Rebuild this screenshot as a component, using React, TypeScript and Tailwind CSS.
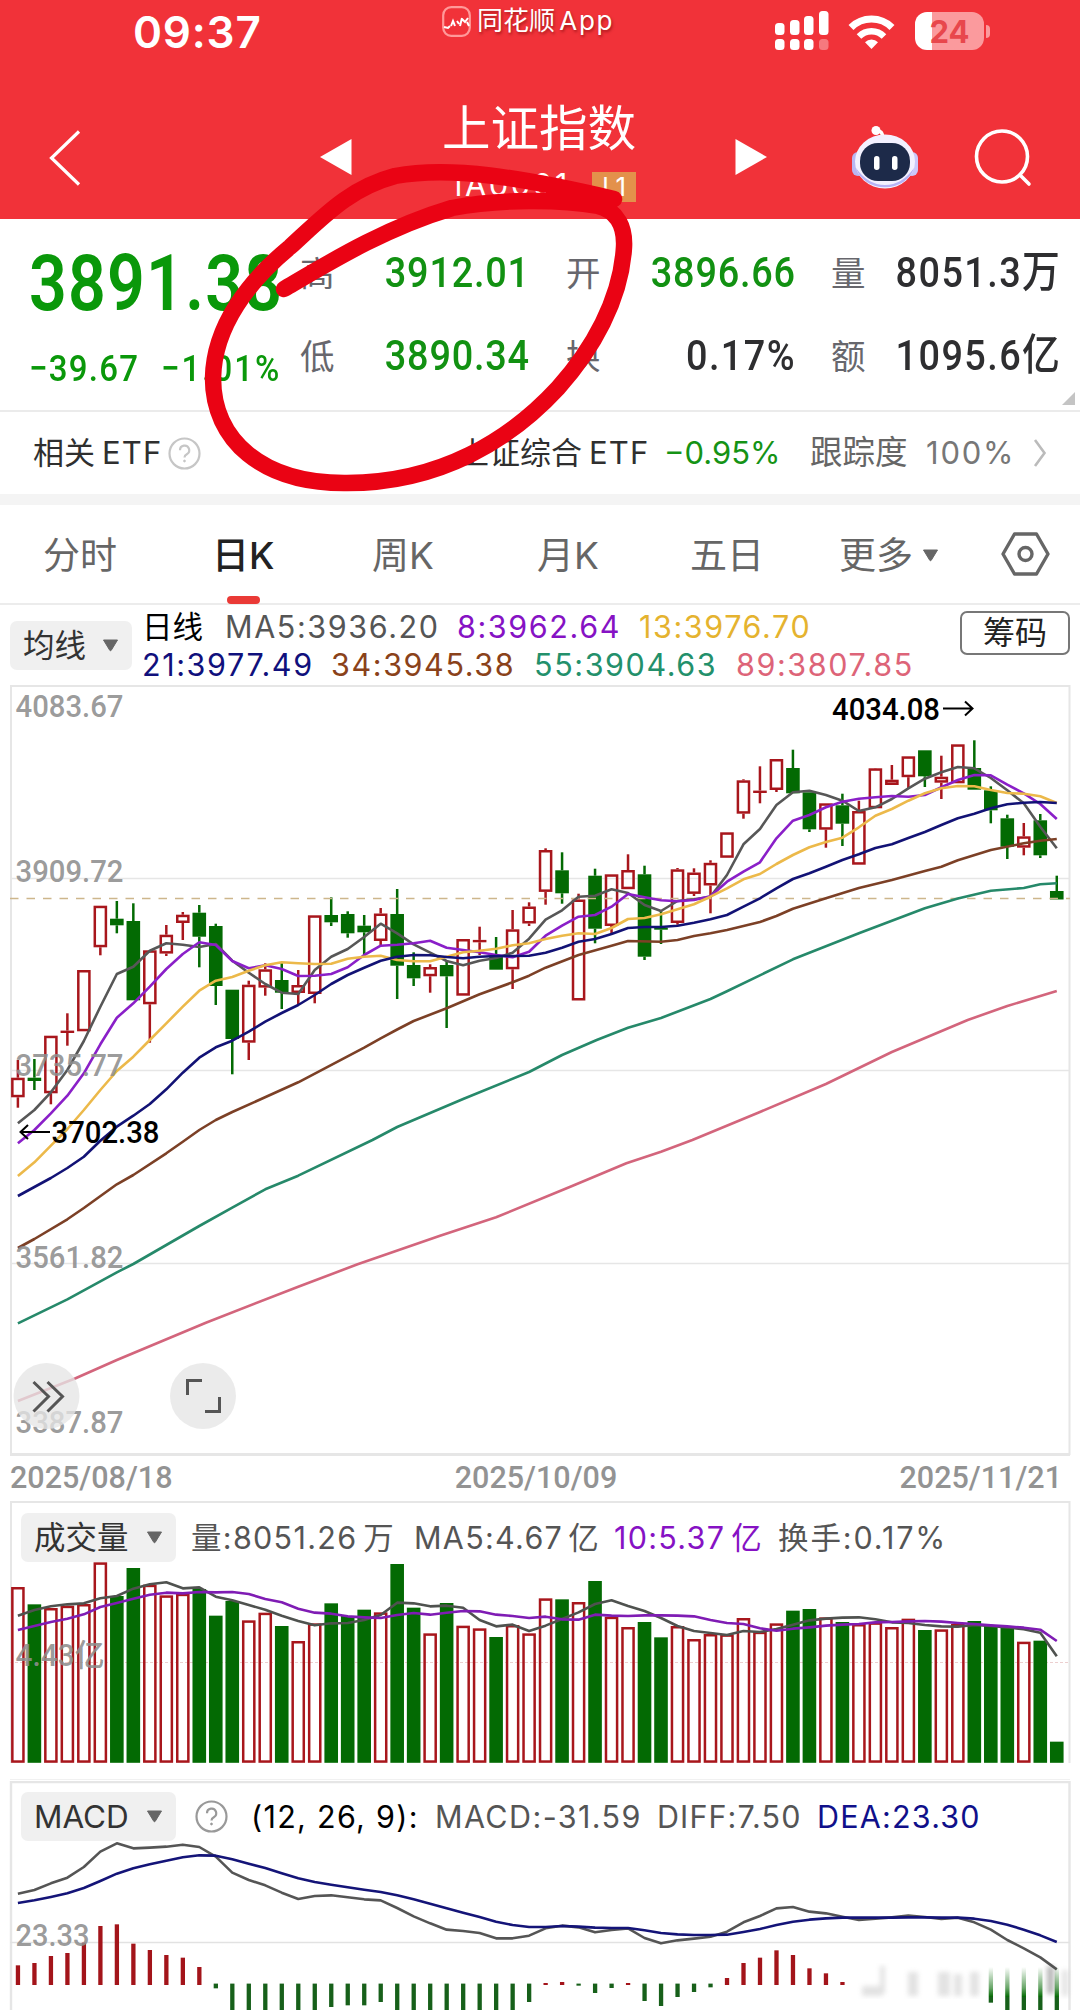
import clsx from "clsx";
import type { ReactNode } from "react";

type Candle = [
  up: number,
  high: number,
  top: number,
  bottom: number,
  low: number,
];

const STEP = 16.49;
const FIRST_X = 17.9;
const BAR_W = 13.6;
const xAt = (i: number) => FIRST_X + i * STEP;

const RED = "#a8161c";
const GREEN = "#036a03";

const CANDLES: Candle[] = [
  [1, 1060, 1077.7, 1097.3, 1107.7],
  [0, 1059, 1077.7, 1081, 1090],
  [1, 1035.7, 1035.7, 1093.3, 1104.3],
  [1, 1013.3, 1030.6, 1033, 1045.7],
  [1, 970, 970, 1031.3, 1031.3],
  [1, 905.7, 905.7, 947.3, 955.3],
  [0, 901, 918.7, 925.3, 933.3],
  [0, 903.3, 921, 1000.3, 1000.3],
  [1, 950.3, 950.3, 1004.3, 1042.7],
  [1, 925, 934.7, 953.6, 956],
  [1, 912, 914.7, 923, 940],
  [0, 905, 912.7, 936.7, 967.3],
  [0, 923.7, 926, 986, 1005],
  [0, 989.7, 989.7, 1039, 1074.3],
  [1, 980.7, 984.7, 1042.7, 1060],
  [1, 963.3, 969.3, 987.6, 995.7],
  [0, 962.7, 980, 992.7, 1009],
  [1, 970, 985, 993, 1004],
  [1, 915.3, 915.3, 994, 1003.3],
  [0, 897.3, 915, 922.3, 926],
  [0, 911.3, 914, 933.3, 937.7],
  [0, 915, 925.7, 932.3, 956.7],
  [1, 908, 913.5, 941, 945.7],
  [0, 889, 914, 965.7, 999],
  [0, 952.3, 965, 978.3, 986],
  [1, 964.3, 967, 976.3, 992.7],
  [0, 960, 965, 976.3, 1028],
  [1, 939, 939, 995.7, 995.7],
  [1, 926.7, 939.9, 942.3, 955],
  [0, 937, 955.7, 969.7, 969.7],
  [1, 910, 929.3, 969.3, 989],
  [1, 902.3, 906.5, 923.5, 926],
  [1, 848.3, 850, 891.9, 904.7],
  [0, 852.3, 870.3, 893.3, 903.7],
  [1, 893.7, 899.5, 1000.5, 1000.5],
  [0, 868.7, 875.7, 928.7, 943.3],
  [1, 874.3, 874.3, 926, 934],
  [1, 854.3, 870, 889.2, 889.2],
  [0, 865.7, 874.3, 956.7, 960],
  [0, 910, 927.7, 929.7, 944],
  [1, 868, 869.3, 923, 924.7],
  [1, 868.3, 872.5, 893.9, 896],
  [1, 860.3, 862.8, 885.5, 913.3],
  [1, 832.3, 832.3, 857.8, 857.8],
  [1, 779.3, 780.3, 813.7, 818.7],
  [1, 766.3, 790.6, 793, 803.3],
  [1, 759, 759, 790, 792],
  [0, 749.7, 768, 793.3, 793.3],
  [0, 792.3, 792.3, 829.3, 832],
  [1, 803.3, 803.3, 829.7, 847.7],
  [0, 793.7, 805.3, 823.7, 846],
  [1, 800.7, 811, 864.7, 864.7],
  [1, 768, 768.3, 808.3, 808.3],
  [1, 765, 779.7, 785, 785],
  [1, 756.3, 756.3, 777.2, 788.7],
  [0, 750.3, 750.3, 776.3, 787],
  [1, 755.7, 776.7, 782.7, 799],
  [1, 744.3, 744.3, 783.3, 783.3],
  [0, 740.3, 768, 789.7, 789.7],
  [0, 786.3, 790.3, 810.3, 823.3],
  [0, 814.7, 818.3, 846.7, 859],
  [1, 823, 836.3, 847.7, 855.3],
  [0, 814, 820.3, 855.3, 858],
  [0, 875.7, 891, 899.5, 899.5],
];

const MA5 = [
  1123.3, 1110, 1092.3, 1070, 1041, 1006.7, 974, 966.7, 950.7, 943.3, 944.7,
  947, 944, 960.7, 972.7, 984, 992.7, 994, 970, 956.7, 949, 937, 923.7, 933.3,
  944.3, 952.7, 961, 965.3, 960.7, 958, 952.7, 938.7, 919.7, 910.3, 896.7,
  895.7, 889.3, 893, 905, 911, 901, 899.3, 896.7, 875, 844.3, 829, 805, 792.3,
  790.7, 795, 800.7, 811, 807.3, 799, 788.3, 778.7, 772.3, 767, 768.3, 778,
  790.3, 803.3, 826.7, 848.3,
];
const MA8 = [
  1143.3, 1130, 1113.3, 1095.7, 1073.3, 1044.3, 1017.7, 1003.3, 986.7, 969,
  954, 942.3, 945, 961, 968.3, 965.3, 969, 976, 975.7, 974, 967.3, 955, 945.7,
  944.7, 943.3, 940.7, 947.7, 950, 952.3, 955, 957.3, 951.7, 935.7, 925.7,
  916.7, 915, 906.7, 894, 897.3, 900.3, 901.3, 900, 896.3, 881.7, 871.7, 862.3,
  838.3, 820.7, 815, 807.3, 801.7, 798.7, 797.3, 796, 796.7, 795, 787.3, 780,
  775, 775.3, 784.7, 793.3, 804, 819,
];
const MA13 = [
  1176, 1162.3, 1145.7, 1129, 1110, 1090, 1071, 1056.7, 1040, 1023.3, 1006.7,
  990.7, 980.7, 977, 970.7, 965.3, 962.3, 963.3, 964, 963.7, 958.7, 956.7,
  955.7, 960, 961.3, 961.3, 956.7, 952.3, 950.7, 948.7, 945.3, 943.3, 939,
  935.7, 933.3, 934, 928, 919, 918, 914.3, 909.3, 904.3, 896.7, 888.3, 879.3,
  874, 864, 855, 847.3, 842, 837.7, 827.3, 815.7, 809, 800.7, 793.3, 788.3,
  786, 786.3, 790, 793, 793.7, 796.3, 803,
];
const MA21 = [
  1196, 1187, 1178, 1168, 1156.7, 1140.7, 1126.7, 1115.7, 1104, 1089.3, 1072.7,
  1057.7, 1047.3, 1040.7, 1031.7, 1021.7, 1013, 1005, 995, 984, 975, 967.7,
  960.7, 956.7, 955, 955.3, 957, 958.3, 956.7, 956, 956, 955.7, 952.7, 947.7,
  941.7, 939, 934, 928, 927, 927, 925.7, 922.7, 919.3, 915, 906.7, 898.3,
  888.3, 879, 873.3, 866.7, 860, 854.3, 848, 844.3, 838, 832, 825, 818.3,
  813.7, 808.3, 804.3, 802.7, 802, 803,
];

// the slow averages are nearly straight, so [index, y] knots are enough
const MA34 = [
  [0, 1248], [1, 1239], [3, 1219.3], [4, 1208], [6, 1184.3], [7, 1175],
  [9, 1153.3], [10, 1141.7], [11, 1130], [12, 1120], [13, 1112], [17, 1082.3],
  [21, 1047.7], [22, 1038.3], [23, 1029.5], [24, 1021], [26, 1008.3],
  [28, 994.3], [30, 982.3], [31, 975.7], [32, 967.7], [34, 955], [36, 945.7],
  [37, 941], [39, 941.7], [40, 940], [41, 936], [42, 933.3], [43, 930],
  [44, 926], [45, 922], [46, 916], [47, 908.7], [49, 898.3], [51, 888],
  [53, 880], [55, 871], [56, 866.7], [57, 860.3], [59, 850], [61, 843.3],
  [62, 840.7], [63, 839],
];
const MA55 = [
  [0, 1323.3], [3, 1299.3], [6, 1272.3], [7, 1264], [11, 1226], [13, 1207.7],
  [15, 1189.3], [17, 1175.7], [21.5, 1140], [23, 1127], [27, 1099],
  [31, 1072], [33, 1055], [35.1, 1040], [37, 1027.7], [39, 1018], [42, 999],
  [43, 991.3], [47, 959.3], [51, 933.3], [55, 908.3], [57, 898.5],
  [59, 890.7], [61, 888], [62, 884.3], [63, 883.3],
];
const MA89 = [
  [0, 1401], [3.5, 1378.3], [6, 1360], [11.4, 1322.7], [17, 1286.7],
  [20.6, 1264.3], [25.6, 1235.7], [29, 1217.3], [33.5, 1186.7],
  [36.9, 1163.3], [39, 1151.7], [40.9, 1140], [45, 1112], [49, 1084],
  [53, 1052], [57.6, 1020], [60, 1006], [63, 991],
];

// volume and MACD are stored in thirds of a pixel from the panel origin
const VOLUME = [
  291, 343, 354, 347, 342, 217, 318, 234, 284, 316, 311, 297, 377, 333, 391,
  368, 408, 453, 400, 340, 378, 359, 367, 222, 353, 430, 339, 407, 415, 441,
  405, 430, 325, 328, 336, 273, 380, 411, 396, 442, 408, 447, 432, 433, 384,
  425, 400, 362, 357, 382, 396, 402, 397, 411, 386, 420, 418, 402, 393, 407,
  413, 455, 452, 755,
];
const VOL_MA5 = [
  377, 360, 349, 343, 340, 325, 318, 296, 283, 277, 295, 292, 320, 331, 345,
  359, 377, 393, 406, 400, 399, 390, 375, 338, 340, 349, 347, 353, 390, 409,
  404, 423, 407, 387, 367, 342, 331, 348, 363, 384, 408, 423, 429, 435, 423,
  426, 417, 404, 391, 386, 383, 382, 388, 397, 399, 405, 409, 410, 405, 408,
  412, 418, 428, 499,
];
const VOL_MA10 = [
  420, 408, 396, 386, 373, 351, 339, 326, 314, 308, 310, 306, 307, 306, 312,
  327, 337, 356, 368, 371, 379, 382, 384, 375, 369, 374, 368, 363, 364, 374,
  378, 384, 380, 388, 389, 374, 377, 378, 376, 376, 377, 379, 390, 399, 402,
  415, 422, 416, 412, 407, 404, 402, 397, 396, 394, 393, 395, 399, 402, 406,
  409, 413, 419, 453,
];
const DIFF = [
  371, 360, 340, 323, 291, 245, 220, 235, 233, 230, 224, 231, 260, 308, 330,
  346, 368, 387, 378, 376, 382, 388, 391, 414, 439, 460, 479, 483, 489, 505,
  505, 497, 475, 467, 472, 487, 480, 475, 504, 520, 511, 506, 500, 485, 457,
  438, 415, 411, 425, 430, 440, 450, 446, 442, 437, 441, 447, 443, 457, 479,
  510, 535, 562, 598,
];
const DEA = [
  399, 391, 381, 370, 354, 333, 311, 295, 283, 272, 262, 256, 257, 268, 281,
  294, 310, 325, 336, 344, 352, 359, 366, 376, 388, 401, 415, 428, 441, 455,
  465, 471, 471, 468, 470, 473, 474, 474, 481, 489, 493, 495, 495, 494, 486,
  477, 465, 455, 449, 445, 443, 443, 443, 443, 442, 442, 443, 443, 446, 453,
  464, 479, 496, 516,
];
// 0 = nothing drawn
const HIST = [
  586, 579, 558, 549, 518, 468, 463, 521, 540, 555, 563, 591, 655, 760, 760,
  760, 760, 760, 760, 711, 706, 706, 696, 760, 760, 760, 760, 760, 760, 760,
  760, 696, 639, 636, 647, 669, 654, 639, 693, 708, 681, 666, 652, 624, 579,
  563, 541, 555, 595, 610, 636, 0, 0, 0, 0, 0, 0, 0, 0, 698, 760, 760, 760,
  760,
];

const toPoints = (ys: number[]) => ys.map((y, i) => `${xAt(i)},${y}`).join(" ");
const knots = (ps: number[][]) =>
  ps.map(([i, y]) => `${xAt(i)},${y}`).join(" ");
const thirds = (ys: number[], origin: number) =>
  toPoints(ys.map((y) => origin + y / 3));

const Line = ({ points, color }: { points: string; color: string }) => (
  <polyline
    points={points}
    fill="none"
    stroke={color}
    strokeWidth={2.6}
    strokeLinejoin="round"
  />
);

const AxisLabel = ({
  x = 15.5,
  y,
  w = 108,
  children,
}: {
  x?: number;
  y: number;
  w?: number;
  children: string;
}) => (
  <text
    x={x}
    y={y}
    textLength={w}
    lengthAdjust="spacingAndGlyphs"
    className="fill-[#8e8e8e]/90 font-['Roboto','Noto_Sans_CJK_SC',sans-serif] text-[30.5px] font-medium"
  >
    {children}
  </text>
);

const Caret = () => (
  <svg width="17" height="13" viewBox="0 0 17 13">
    <path
      d="M1.5 1h14L9.3 11.2q-.8 1-1.6 0z"
      fill="#666"
      stroke="#666"
      strokeLinejoin="round"
    />
  </svg>
);

const Help = ({ color }: { color: string }) => (
  <svg width="33" height="33" viewBox="0 0 33 33" fill="none" stroke={color}>
    <circle cx="16.5" cy="16.5" r="15" strokeWidth="2.2" />
    <path
      d="M12 13.2a4.6 4.6 0 1 1 6.8 4q-2.3 1.3-2.3 3.2"
      strokeWidth="2.2"
    />
    <circle cx="16.5" cy="24" r=".9" fill={color} />
  </svg>
);

const StatusBar = () => (
  <div className="flex h-[62px] items-center text-white">
    <div className="w-[442px] pt-[2px] pl-[133px] text-[44px] leading-none font-semibold tracking-[0.8px]">
      09:37
    </div>
    <div className="flex w-[332px] items-center gap-[6px] pb-[20px]">
      <svg width="29" height="31" viewBox="0 0 29 31" fill="none">
        <rect
          x="1.2"
          y="1.2"
          width="26.6"
          height="28.6"
          rx="8"
          stroke="#f99"
          strokeWidth="2.2"
        />
        <path
          d="M2 21l4 1 2-2M9 20l2-5 2 5M15 15l2 3M18 20l2-8M20 13l3 3 3-4M25 16l2 4"
          stroke="#fff"
          strokeWidth="2"
        />
      </svg>
      <span className="text-[26px] leading-none whitespace-nowrap [text-shadow:1px_2px_3px_#6008]">
        同花顺 <span className="-ml-[3px] tracking-[1.7px]">App</span>
      </span>
    </div>
    <svg width="55" height="40" viewBox="0 0 55 40" fill="#fff">
      <rect x="1" y="12" width="9.5" height="12" rx="3.5" />
      <rect x="16" y="9" width="9.5" height="15" rx="3.5" />
      <rect x="30" y="5" width="9.5" height="19" rx="3.5" />
      <rect x="45" y="0" width="9.5" height="24" rx="3.5" />
      <rect x="1" y="28" width="9.5" height="11" rx="3.5" />
      <rect x="16" y="28" width="9.5" height="11" rx="3.5" />
      <rect x="30" y="28" width="9.5" height="11" rx="3.5" />
      <rect x="45" y="28" width="9.5" height="11" rx="3.5" opacity=".35" />
    </svg>
    <svg
      className="ml-[19px]"
      width="47"
      height="37"
      viewBox="0 0 47 37"
      fill="none"
      stroke="#fff"
      strokeWidth="7"
    >
      <path d="M3 14.5a29 29 0 0 1 41 0" />
      <path d="M11 23.5a17.7 17.7 0 0 1 25 0" strokeWidth="6.5" />
      <path
        d="M17 29.2a9.2 9.2 0 0 1 13 0L23.5 36z"
        fill="#fff"
        stroke="none"
      />
    </svg>
    <div className="ml-[20px] flex h-[38px] w-[69px] items-center justify-center rounded-[12px] bg-linear-to-r from-white from-25% to-[#fb9a9d] to-25% text-[31px] leading-none font-bold text-[#e8474c]">
      24
    </div>
    <div className="ml-[2px] h-[13px] w-[4px] rounded-r-full bg-[#fb9a9d]" />
  </div>
);

const Robot = () => (
  <svg width="68" height="66" viewBox="0 0 68 66">
    <path d="M32 13q-1-6-5-6" fill="none" stroke="#fff" strokeWidth="3.5" />
    <circle cx="25" cy="6.5" r="4.5" fill="#fff" />
    <rect x="1" y="28" width="12" height="24" rx="6" fill="#b9b6f3" />
    <rect x="55" y="28" width="12" height="24" rx="6" fill="#cbc8fa" />
    <ellipse cx="34" cy="37.5" rx="30" ry="27" fill="#f3f1ff" />
    <path d="M5 44a30 26 0 0 0 58 0q-12 17-29 17T5 44z" fill="#b6b2f5" />
    <rect x="9" y="19" width="50" height="38" rx="18" fill="#1d2a49" />
    <rect x="23" y="32" width="5.5" height="14" rx="2.7" fill="#fff" />
    <rect x="41" y="32" width="5.5" height="14" rx="2.7" fill="#fff" />
  </svg>
);

const TitleBar = () => (
  <div className="flex h-[157px] items-start text-white">
    <svg
      className="mt-[68px] ml-[48px]"
      width="34"
      height="56"
      viewBox="0 0 34 56"
    >
      <path
        d="M31 1.5L3.5 28 31 54.5"
        fill="none"
        stroke="#fff"
        strokeWidth="3.2"
      />
    </svg>
    <svg
      className="mt-[77px] ml-[238px]"
      width="32"
      height="36"
      viewBox="0 0 32 36"
    >
      <path d="M31.5 0v36L0 18z" fill="#fff" />
    </svg>
    <div className="mt-[39px] ml-[90px] flex w-[194px] flex-col items-center">
      <div className="text-[48.5px] leading-[56px] whitespace-nowrap">
        上证指数
      </div>
      <div className="mt-[15px] flex w-full items-center justify-between pl-[8px]">
        <span className="-mt-[5px] text-[31px] leading-[34px] tracking-[2.4px]">
          1A0001
        </span>
        <span className="flex h-[30px] w-[44px] items-center justify-center bg-[#e3914b] text-[26px] leading-none">
          L1
        </span>
      </div>
    </div>
    <svg
      className="mt-[77px] ml-[99px]"
      width="32"
      height="36"
      viewBox="0 0 32 36"
    >
      <path d="M.5 0v36L32 18z" fill="#fff" />
    </svg>
    <div className="mt-[62px] ml-[84px]">
      <Robot />
    </div>
    <svg
      className="mt-[67px] ml-[55px]"
      width="58"
      height="58"
      viewBox="0 0 58 58"
      fill="none"
      stroke="#fff"
      strokeWidth="3.6"
    >
      <circle cx="28" cy="27.5" r="25.5" />
      <path d="M46 46l9 9" strokeLinecap="round" />
    </svg>
  </div>
);

const Cell = ({
  label,
  value,
  green,
}: {
  label: string;
  value: ReactNode;
  green?: boolean;
}) => (
  <div className="flex h-[83px] items-center justify-between whitespace-nowrap">
    <span className="pt-[3px] text-[34.5px] leading-none text-[#67676d]">
      {label}
    </span>
    <span
      className={clsx(
        "origin-right scale-x-[0.88] font-['Roboto','Noto_Sans_CJK_SC',sans-serif] text-[43px] leading-none font-medium",
        green
          ? "tracking-[0.9px] text-[#129112]"
          : "tracking-[1.6px] text-[#2e2e30]",
      )}
    >
      {value}
    </span>
  </div>
);

const Quote = () => (
  <section className="relative flex h-[193px] border-b-2 border-[#ebebeb] bg-white">
    <div className="w-[300px] pl-[29px] font-['Roboto',sans-serif] whitespace-nowrap text-[#0a980a]">
      <div className="w-full origin-left scale-x-[0.86] pt-[24px] text-[77px] leading-[82px] font-semibold tracking-[1.4px]">
        3891.38
      </div>
      <div className="mt-[22px] flex text-[37.5px] leading-[42px] font-medium">
        <span className="w-[132px] origin-left scale-x-[0.88] tracking-[1.4px]">
          −39.67
        </span>
        <span className="origin-left scale-x-[0.88] tracking-[2.3px]">
          −1.01%
        </span>
      </div>
    </div>
    <div className="w-[230px] pt-[12px]">
      <Cell label="高" value="3912.01" green />
      <Cell label="低" value="3890.34" green />
    </div>
    <div className="ml-[36px] w-[230px] pt-[12px]">
      <Cell label="开" value="3896.66" green />
      <Cell label="换" value="0.17%" />
    </div>
    <div className="ml-[35px] w-[230px] pt-[12px]">
      <Cell label="量" value="8051.3万" />
      <Cell label="额" value="1095.6亿" />
    </div>
    <svg
      className="absolute right-[5px] bottom-[5px]"
      width="13"
      height="13"
      viewBox="0 0 13 13"
    >
      <path d="M13 0v13H0z" fill="#c4c4c4" />
    </svg>
  </section>
);

const EtfRow = () => (
  <section className="flex h-[93px] items-center border-b-[11px] border-[#f4f4f4] bg-white pl-[33px] text-[31px] whitespace-nowrap text-[#2f2f2f]">
    <span className="w-[135px]">
      相关<span className="ml-[7px] tracking-[1.2px]">ETF</span>
    </span>
    <Help color="#c6c6c6" />
    <span className="ml-[257px] w-[206px]">
      上证综合<span className="ml-[7px] tracking-[1.2px]">ETF</span>
    </span>
    <span className="w-[146px] text-[#159315]">−0.95%</span>
    <span className="w-[116px] text-[32.5px] text-[#666]">跟踪度</span>
    <span className="w-[107px] tracking-[1.8px] text-[#777]">100%</span>
    <svg width="14" height="28" viewBox="0 0 14 28">
      <path
        d="M2 1l9.5 13L2 27"
        fill="none"
        stroke="#bbb"
        strokeWidth="2.6"
      />
    </svg>
  </section>
);

const Tabs = () => (
  <nav className="flex h-[100px] items-center border-b-2 border-[#ececec] bg-white pt-[3px] text-[37px] whitespace-nowrap text-[#666]">
    <span className="w-[212px] pl-[43px]">分时</span>
    <span className="relative w-[160px] font-medium text-[#222]">
      日K
      <span className="absolute top-[68px] left-[15px] h-[8px] w-[33px] rounded-full bg-[#ea3a36]" />
    </span>
    <span className="w-[165px]">周K</span>
    <span className="w-[153px]">月K</span>
    <span className="w-[149px]">五日</span>
    <span className="flex w-[162px] items-center gap-[9px]">
      更多 <Caret />
    </span>
    <svg
      className="-mt-[3px]"
      width="49"
      height="44"
      viewBox="0 0 49 44"
      fill="none"
      stroke="#666"
      strokeWidth="3.4"
      strokeLinejoin="round"
    >
      <path d="M13.5 2h22L47 22 35.5 42h-22L2 22z" />
      <circle cx="24.5" cy="22" r="6.5" />
    </svg>
  </nav>
);

const Pill = ({
  children,
  className,
}: {
  children: string;
  className: string;
}) => (
  <div
    className={clsx(
      "flex h-[49px] shrink-0 items-center justify-between rounded-[7px] bg-[#f0f0f0] text-[31.5px] leading-none whitespace-nowrap text-[#333]",
      className,
    )}
  >
    {children}
    <Caret />
  </div>
);

const MaLegend = () => (
  <section className="flex h-[80px] bg-white pl-[10px] text-[30.5px] whitespace-nowrap">
    <Pill className="mt-[16px] w-[122px] px-[13px]">均线</Pill>
    <div className="ml-[10px] w-[818px] pt-[3px] tracking-[1.6px]">
      <div className="flex h-[38px] items-center">
        <span className="w-[83px] tracking-normal text-black">日线</span>
        <span className="w-[232px] text-[#555]">MA5:3936.20</span>
        <span className="w-[182px] text-[#8612c4]">8:3962.64</span>
        <span className="text-[#e5b32f]">13:3976.70</span>
      </div>
      <div className="flex h-[38px] items-center">
        <span className="w-[189px] text-[#10107c]">21:3977.49</span>
        <span className="w-[203px] text-[#8a421a]">34:3945.38</span>
        <span className="w-[202px] text-[#23906b]">55:3904.63</span>
        <span className="text-[#dd6478]">89:3807.85</span>
      </div>
    </div>
    <div className="mt-[6px] flex h-[44px] w-[110px] items-center justify-center rounded-[7px] border-2 border-[#777] text-[32px] leading-none text-[#222]">
      筹码
    </div>
  </section>
);

const KLine = () => (
  <svg
    className="block"
    width="1080"
    height="771"
    viewBox="0 685 1080 771"
    fill="none"
  >
    <path
      d="M10 878.5h1060M10 1070.5h1060M10 1263.5h1060"
      stroke="#e6e6e6"
      strokeWidth="1.5"
    />
    <path d="M11 1455V686H1069.5V1455" stroke="#e6e6e6" strokeWidth="2" />
    <path d="M10 1454.5H1070" stroke="#e6e6e6" strokeWidth="3" />
    {CANDLES.map(([up, high, top, bottom, low], i) => {
      const x = xAt(i);
      const color = up ? RED : GREEN;
      const hollow = up && bottom - top > 4;
      return (
        <g key={i} stroke={color} strokeWidth="2.5">
          {high < top && <path d={`M${x} ${high}V${top}`} />}
          {low > bottom && <path d={`M${x} ${bottom}V${low}`} />}
          {hollow ? (
            <rect
              x={x - BAR_W / 2 + 1.25}
              y={top + 1.25}
              width={BAR_W - 2.5}
              height={bottom - top - 2.5}
            />
          ) : (
            <rect
              x={x - BAR_W / 2}
              y={top}
              width={BAR_W}
              height={bottom - top}
              fill={color}
              stroke="none"
            />
          )}
        </g>
      );
    })}
    <path
      d="M10 898.5H1070"
      stroke="#cdb68c"
      strokeWidth="1.4"
      strokeDasharray="8.5 8"
    />
    <Line points={toPoints(MA5)} color="#575757" />
    <Line points={toPoints(MA8)} color="#8a1fc8" />
    <Line points={toPoints(MA13)} color="#ecb94a" />
    <Line points={toPoints(MA21)} color="#121275" />
    <Line points={knots(MA34)} color="#7c4026" />
    <Line points={knots(MA55)} color="#26896a" />
    <Line points={knots(MA89)} color="#d3657c" />
    <AxisLabel y={717}>4083.67</AxisLabel>
    <AxisLabel y={882}>3909.72</AxisLabel>
    <AxisLabel y={1075.5}>3735.77</AxisLabel>
    <AxisLabel y={1268}>3561.82</AxisLabel>
    <AxisLabel y={1433}>3387.87</AxisLabel>
    <g className="fill-black font-['Roboto',sans-serif] text-[31px] font-medium">
      <text x="51.5" y="1143" textLength="108" lengthAdjust="spacingAndGlyphs">
        3702.38
      </text>
      <text x="832" y="720" textLength="108" lengthAdjust="spacingAndGlyphs">
        4034.08
      </text>
    </g>
    <path
      d="M50 1132H21M28 1125l-7.5 7 7.5 7M943 708.5h29M965 701.5l7.5 7-7.5 7"
      stroke="#000"
      strokeWidth="2"
    />
    <g fill="#e6e6e6" fillOpacity=".78">
      <circle cx="46.5" cy="1396" r="33" />
      <circle cx="203" cy="1396" r="33" />
    </g>
    <path
      d="M33.5 1382l15 14.5-15 15M47.5 1382l15 14.5-15 15M202 1380.5h-14.5v14.5M205 1411.5h14.5V1397"
      stroke="#555"
      strokeWidth="3"
    />
  </svg>
);

const Dates = () => (
  <div className="flex h-[45px] items-center justify-between bg-white pr-[18px] pb-[2px] pl-[10px] font-['Roboto',sans-serif] text-[30.5px] font-medium text-[#939393]">
    <span>2025/08/18</span>
    <span>2025/10/09</span>
    <span>2025/11/21</span>
  </div>
);

const Volume = () => (
  <section className="relative h-[280px] bg-white">
    <svg
      className="block"
      width="1080"
      height="280"
      viewBox="0 1501 1080 280"
      fill="none"
    >
      <path d="M11 1763V1502H1069.5V1763" stroke="#e6e6e6" strokeWidth="2" />
      <path d="M10 1662.5H1070" stroke="#eccfcf" strokeDasharray="3 2" />
      <path d="M10 1779.5H1070" stroke="#f1f1f1" />
      {VOLUME.map((v, i) => {
        const x = xAt(i) - BAR_W / 2;
        const y = 1490 + v / 3;
        return CANDLES[i][0] ? (
          <rect
            key={i}
            x={x + 1.25}
            y={y + 1.25}
            width={BAR_W - 2.5}
            height={1762.8 - y - 2.5}
            stroke={RED}
            strokeWidth="2.5"
          />
        ) : (
          <rect
            key={i}
            x={x}
            y={y}
            width={BAR_W}
            height={1762.8 - y}
            fill={GREEN}
          />
        );
      })}
      <Line points={thirds(VOL_MA5, 1490)} color="#4f524f" />
      <Line points={thirds(VOL_MA10, 1490)} color="#7f1cb4" />
      <AxisLabel y={1666} w={89}>
        4.43亿
      </AxisLabel>
    </svg>
    <div className="absolute top-[12px] left-[21px] flex items-center text-[30.5px] tracking-[1.3px] whitespace-nowrap text-[#555]">
      <Pill className="w-[155px] px-[13px] tracking-normal">成交量</Pill>
      <span className="ml-[15px] w-[223px]">
        量:8051.26<span className="ml-[6px]">万</span>
      </span>
      <span className="w-[200px]">
        MA5:4.67<span className="ml-[5px]">亿</span>
      </span>
      <span className="w-[164px] text-[#8612c4]">
        10:5.37<span className="ml-[6px]">亿</span>
      </span>
      <span className="tracking-[1.9px]">换手:0.17%</span>
    </div>
  </section>
);

const Macd = () => (
  <section className="relative h-[229px] bg-white">
    <svg
      className="block"
      width="1080"
      height="229"
      viewBox="0 1781 1080 229"
      fill="none"
    >
      <defs>
        <linearGradient id="smear" x1="0" y1="0" x2="0" y2="1">
          <stop offset="0" stopColor={GREEN} stopOpacity="0" />
          <stop offset="0.7" stopColor={GREEN} stopOpacity="0.6" />
          <stop offset="1" stopColor={GREEN} />
        </linearGradient>
        <filter id="soft">
          <feGaussianBlur stdDeviation="2.5" />
        </filter>
      </defs>
      <path d="M11 2010V1782H1069.5V2010" stroke="#e6e6e6" strokeWidth="2.4" />
      <path d="M10 1942.5H1070" stroke="#e2e2e2" strokeWidth="1.4" />
      {HIST.map((v, i) => {
        if (!v) return null;
        const up = v < 641;
        const y = up ? 1770 + v / 3 : 1983.6;
        const end = up ? 1985 : 1770 + v / 3;
        return (
          <rect
            key={i}
            x={xAt(i) - 2.1}
            y={i > 58 ? 1997 : y}
            width="4.3"
            height={i > 58 ? Math.max(end - 1997, 5) : end - y}
            fill={up ? "#a3141a" : "#17601a"}
          />
        );
      })}
      <Line points={thirds(DIFF, 1770)} color="#555" />
      <Line points={thirds(DEA, 1770)} color="#141478" />
      <g fill="#b5b5b5" opacity=".38" filter="url(#soft)">
        <rect x="862" y="1986" width="20" height="10" />
        <rect x="880" y="1966" width="5" height="28" />
        <rect x="908" y="1972" width="10" height="24" />
        <rect x="938" y="1972" width="12" height="24" />
        <rect x="954" y="1974" width="8" height="22" />
        <rect x="970" y="1972" width="9" height="24" />
        <rect x="1047" y="1966" width="7" height="28" fill="#444" />
        <rect x="1062" y="1970" width="6" height="26" />
      </g>
      {[59, 60, 61, 62, 63].map((i) => (
        <rect
          key={i}
          x={xAt(i) - 2.1}
          y={1967}
          width="4.3"
          height="30"
          fill="url(#smear)"
        />
      ))}
      <AxisLabel y={1946} w={74}>
        23.33
      </AxisLabel>
    </svg>
    <div className="absolute top-[11px] left-[21px] flex items-center text-[30.5px] whitespace-nowrap text-[#555]">
      <Pill className="w-[155px] px-[13px]">MACD</Pill>
      <span className="ml-[19px]">
        <Help color="#999" />
      </span>
      <span className="ml-[23px] w-[184px] tracking-[1.3px] text-black">
        (12, 26, 9):
      </span>
      <span className="w-[222px] tracking-[1.4px]">MACD:-31.59</span>
      <span className="w-[160px] tracking-[1.1px]">DIFF:7.50</span>
      <span className="tracking-[1.2px] text-[#10108a]">DEA:23.30</span>
    </div>
  </section>
);

// hand-drawn marker loop around the high / low figures
const Marker = () => (
  <svg
    className="pointer-events-none absolute top-0 left-0"
    width="1080"
    height="520"
    viewBox="0 0 1080 520"
  >
    <path
      d="M284 289C330 262 385 228 452 208C500 199 560 199 598 206C618 211 625 228 624 247C621 300 592 350 558 388C510 440 440 483 347 483C262 484 213 440 213 378C214 325 250 280 290 247C325 215 350 188 395 176C450 166 520 177 614 199"
      fill="none"
      stroke="#ea0314"
      strokeWidth="16.5"
      strokeLinecap="round"
      strokeLinejoin="round"
    />
  </svg>
);

const App = () => {
  return (
    <main className="relative h-[2010px] w-[1080px] overflow-hidden bg-white font-['Inter','Noto_Sans_CJK_SC',sans-serif]">
      <header className="bg-[#f13239]">
        <StatusBar />
        <TitleBar />
      </header>
      <Quote />
      <EtfRow />
      <Tabs />
      <MaLegend />
      <KLine />
      <Dates />
      <Volume />
      <Macd />
      <Marker />
    </main>
  );
};

export default App;
